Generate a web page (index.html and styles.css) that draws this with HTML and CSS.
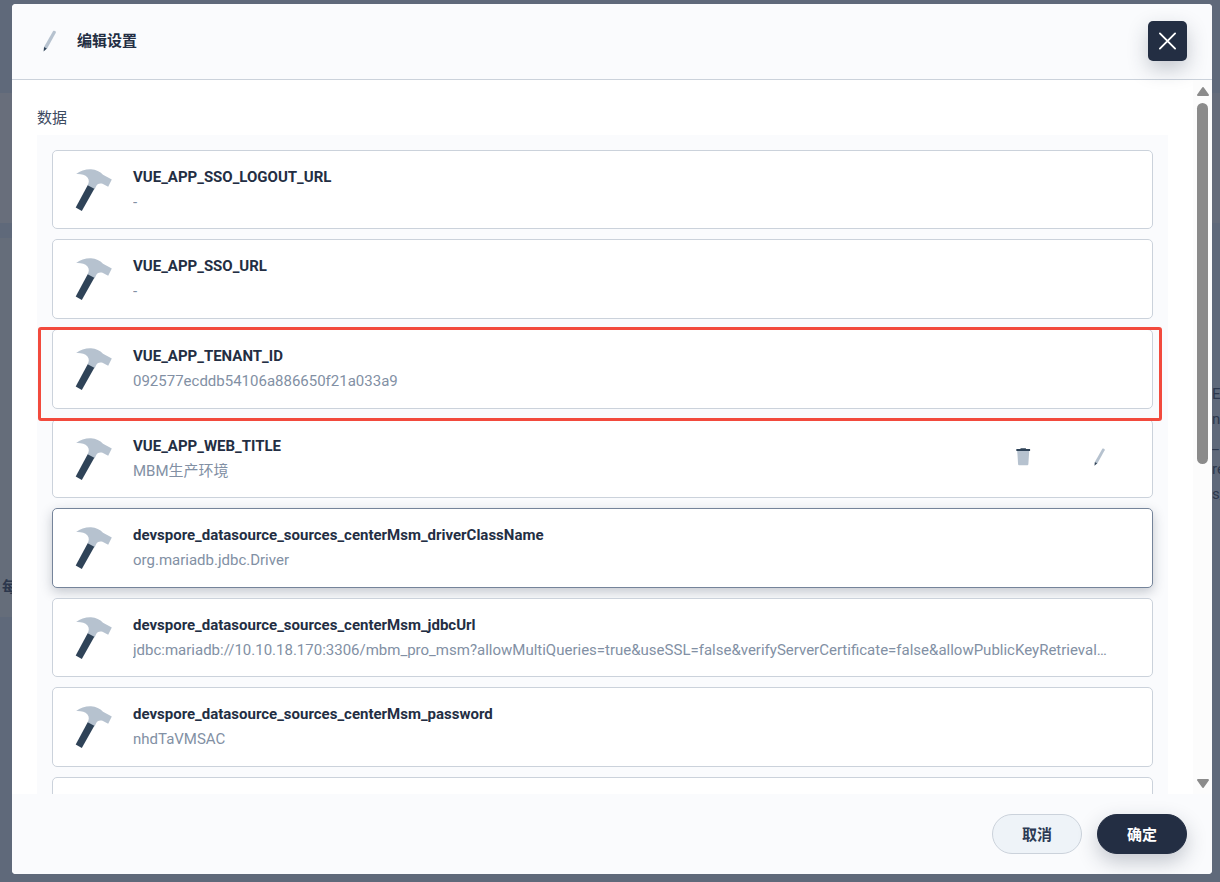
FILE: index.html
```html
<!DOCTYPE html>
<html lang="zh-CN">
<head>
    <meta charset="UTF-8">
    <meta name="viewport" content="width=device-width, initial-scale=1.0">
    <title>编辑设置</title>
    <link rel="stylesheet" href="styles.css">
</head>
<body>
    <!-- shared icons -->
    <svg class="sprite" aria-hidden="true">
        <symbol id="hammer" viewBox="0 0 48 48">
            <path fill="#b6c2cf" d="M7.200 8C11 4.500 17 3 22 3.200C27 3.400 31 5.500 34 8.800L42.800 13.600L39.200 20.800L33.500 17.800C30.500 17 28.500 18 27.500 19.500L25.500 23.500L18.500 19.500C20 17 20.500 14 18.500 11.500C16 8.500 12 7.800 7.200 8Z"/>
            <path fill="#2f4358" d="M18.700 19.200L25.300 22.800L12.800 45L6.700 41.500Z"/>
        </symbol>
        <symbol id="pencil" viewBox="0 0 24 24">
            <path fill="#b6c2cf" d="M16 2.200C17 1 19.500 2.200 18.800 3.800L10 19.700L7 18.100Z"/>
            <path fill="#2f4358" d="M7 17.900L9.900 19.500L6.600 22.400Z"/>
        </symbol>
        <symbol id="trash" viewBox="0 0 24 24">
            <path fill="#b6c2cf" d="M5 4H19.500L18.400 20.800Q18.300 22 17.300 22H7.200Q6.200 22 6.100 20.800Z"/>
            <path fill="#2f4358" d="M9 1.500H15.500V2.300H20.500V4.700H4V2.300H9Z"/>
        </symbol>
    </svg>

    <div class="page">
        <div class="edge left">
            <span class="edge-text">每</span>
        </div>

        <div class="modal" role="dialog" aria-labelledby="title">
            <header class="modal-header">
                <svg class="header-icon"><use href="#pencil"/></svg>
                <h1 id="title">编辑设置</h1>
                <button class="close" aria-label="关闭">
                    <svg viewBox="0 0 20 20"><path d="M2 2L18 18M18 2L2 18" stroke="#fff" stroke-width="2" stroke-linecap="round"/></svg>
                </button>
            </header>

            <div class="modal-body">
                <div class="content">
                    <h2>数据</h2>
                    <ul class="list">
                        <li class="card">
                            <svg class="card-icon"><use href="#hammer"/></svg>
                            <div class="info"><h3>VUE_APP_SSO_LOGOUT_URL</h3><p>-</p></div>
                        </li>
                        <li class="card">
                            <svg class="card-icon"><use href="#hammer"/></svg>
                            <div class="info"><h3>VUE_APP_SSO_URL</h3><p>-</p></div>
                        </li>
                        <li class="card marked">
                            <svg class="card-icon"><use href="#hammer"/></svg>
                            <div class="info"><h3>VUE_APP_TENANT_ID</h3><p>092577ecddb54106a886650f21a033a9</p></div>
                        </li>
                        <li class="card">
                            <svg class="card-icon"><use href="#hammer"/></svg>
                            <div class="info"><h3>VUE_APP_WEB_TITLE</h3><p>MBM生产环境</p></div>
                            <div class="actions">
                                <button aria-label="删除"><svg><use href="#trash"/></svg></button>
                                <button aria-label="编辑"><svg><use href="#pencil"/></svg></button>
                            </div>
                        </li>
                        <li class="card active">
                            <svg class="card-icon"><use href="#hammer"/></svg>
                            <div class="info"><h3>devspore_datasource_sources_centerMsm_driverClassName</h3><p>org.mariadb.jdbc.Driver</p></div>
                        </li>
                        <li class="card">
                            <svg class="card-icon"><use href="#hammer"/></svg>
                            <div class="info"><h3>devspore_datasource_sources_centerMsm_jdbcUrl</h3><p>jdbc:mariadb://10.10.18.170:3306/mbm_pro_msm?allowMultiQueries=true&amp;useSSL=false&amp;verifyServerCertificate=false&amp;allowPublicKeyRetrieval…</p></div>
                        </li>
                        <li class="card">
                            <svg class="card-icon"><use href="#hammer"/></svg>
                            <div class="info"><h3>devspore_datasource_sources_centerMsm_password</h3><p>nhdTaVMSAC</p></div>
                        </li>
                        <li class="card"></li>
                    </ul>
                </div>
                <div class="scrollbar" aria-hidden="true">
                    <svg viewBox="0 0 14 12"><path d="M7 3L12 10H2Z"/></svg>
                    <div class="track"><div class="thumb"></div></div>
                    <svg viewBox="0 0 14 12"><path d="M7 9L12 2H2Z"/></svg>
                </div>
            </div>

            <footer class="modal-footer">
                <button class="btn">取消</button>
                <button class="btn primary">确定</button>
            </footer>
        </div>

        <div class="edge right">
            <span>E</span>
            <span>n</span>
            <span>_</span>
            <span>re</span>
            <span>s_</span>
        </div>
    </div>
</body>
</html>
```

FILE: styles.css
```css
* {
    box-sizing: border-box;
}
body {
    margin: 0;
    font-family: Roboto, "Noto Sans CJK SC", sans-serif;
    font-size: 15px;
    line-height: 25px;
    color: #232e43;
    background-color: #5f697a;
}
h1, h2, h3, p, ul {
    margin: 0;
    padding: 0;
    font-size: 15px;
}
button {
    font-family: inherit;
    font-size: 15px;
    cursor: pointer;
}
.sprite {
    position: absolute;
    width: 0;
    height: 0;
}
.page {
    display: grid;
    grid-template-columns: 12px minmax(0, 1fr) 8px;
    grid-template-rows: 100vh;
}
.edge {
    display: flex;
    flex-direction: column;
    overflow: hidden;
    color: #2c374c;
}
.left {
    background: linear-gradient(#5f697a 93px, #686e7b 93px, #686e7b 223px, #5f697a 223px, #5f697a 238px, #656d7a 238px, #656d7a 617px, #5f697a 617px);
    padding: 575px 0 0 2px;
}
.edge-text {
    font-weight: 700;
}
.right {
    background: linear-gradient(#5f697a 93px, #656c7a 93px, #656c7a 223px, #5f697a 223px);
    padding-top: 382px;
}
.modal {
    display: flex;
    flex-direction: column;
    min-height: 0;
    margin: 4px 0 8px;
    border-radius: 4px;
    background-color: #fff;
    overflow: hidden;
}
.modal-header {
    display: flex;
    align-items: center;
    flex-shrink: 0;
    height: 76px;
    padding: 0 25px 1px;
    border-bottom: 1px solid #cbd2db;
    background-color: #fafbfd;
}
.header-icon {
    width: 24px;
    height: 24px;
    margin-right: 16px;
}
.close {
    display: flex;
    align-items: center;
    justify-content: center;
    width: 39px;
    height: 40px;
    margin-left: auto;
    padding: 0;
    border: none;
    border-radius: 5px;
    background-color: #232e43;
    box-shadow: 0 8px 20px rgba(35, 46, 67, 0.25);
}
.close svg {
    width: 19px;
    height: 20px;
}
.modal-body {
    display: flex;
    flex: 1;
    min-height: 0;
    overflow: hidden;
}
.content {
    flex: 1;
    min-width: 0;
    padding: 26px 25px 0;
}
.content h2 {
    margin-bottom: 4px;
    font-weight: 400;
    color: #3c4a60;
}
.list {
    display: grid;
    grid-auto-rows: 79px 80px 80px 79px 80px;
    gap: 10px;
    padding: 15px;
    list-style: none;
    background-color: #fafbfd;
}
.card {
    display: flex;
    align-items: center;
    position: relative;
    min-width: 0;
    padding: 0 43px 0 16px;
    border: 1px solid #cbd2db;
    border-radius: 5px;
    background-color: #fff;
}
.card-icon {
    flex-shrink: 0;
    width: 48px;
    height: 48px;
    margin-right: 16px;
}
.info {
    flex: 1;
    min-width: 0;
}
.info h3 {
    font-weight: 700;
}
.info p {
    color: #8290a4;
    white-space: nowrap;
    overflow: hidden;
    text-overflow: ellipsis;
}
.active {
    border-color: #75849a;
    box-shadow: 0 4px 12px rgba(35, 46, 67, 0.25);
}
.active ~ .card {
    z-index: 1;
}
/* red frame around the highlighted setting */
.marked {
    z-index: 2;
}
.marked::after {
    content: "";
    position: absolute;
    inset: -3px -10px -13px -15px;
    border: 3px solid #f24a3d;
    border-radius: 3px;
}
.actions {
    display: flex;
    gap: 56px;
    padding-bottom: 3px;
}
.actions button {
    height: 20px;
    padding: 0;
    border: none;
    background: none;
}
.actions svg {
    display: block;
    width: 20px;
    height: 20px;
}
.scrollbar {
    display: flex;
    flex-direction: column;
    align-items: center;
    width: 19px;
    padding: 5px 0 4px;
    background-color: #fcfcfc;
}
.scrollbar svg {
    width: 14px;
    height: 12px;
    fill: #8b8b8b;
    stroke: #8b8b8b;
    stroke-width: 2;
    stroke-linejoin: round;
}
.track {
    flex: 1;
    padding: 6px 0;
}
.thumb {
    width: 11px;
    height: 54%;
    border-radius: 6px;
    background-color: #8b8b8b;
}
.modal-footer {
    display: flex;
    align-items: center;
    justify-content: flex-end;
    flex-shrink: 0;
    gap: 15px;
    height: 80px;
    padding: 0 25px;
    background-color: #fafbfd;
}
.btn {
    min-width: 90px;
    height: 40px;
    padding: 0 10px 2px;
    border: 1px solid #cbd2db;
    border-radius: 20px;
    font-weight: 700;
    color: #2c3a54;
    background-color: #eef3f8;
}
.primary {
    border-color: #232e43;
    color: #fff;
    background-color: #232e43;
    box-shadow: 0 8px 20px rgba(35, 46, 67, 0.25);
}
```
